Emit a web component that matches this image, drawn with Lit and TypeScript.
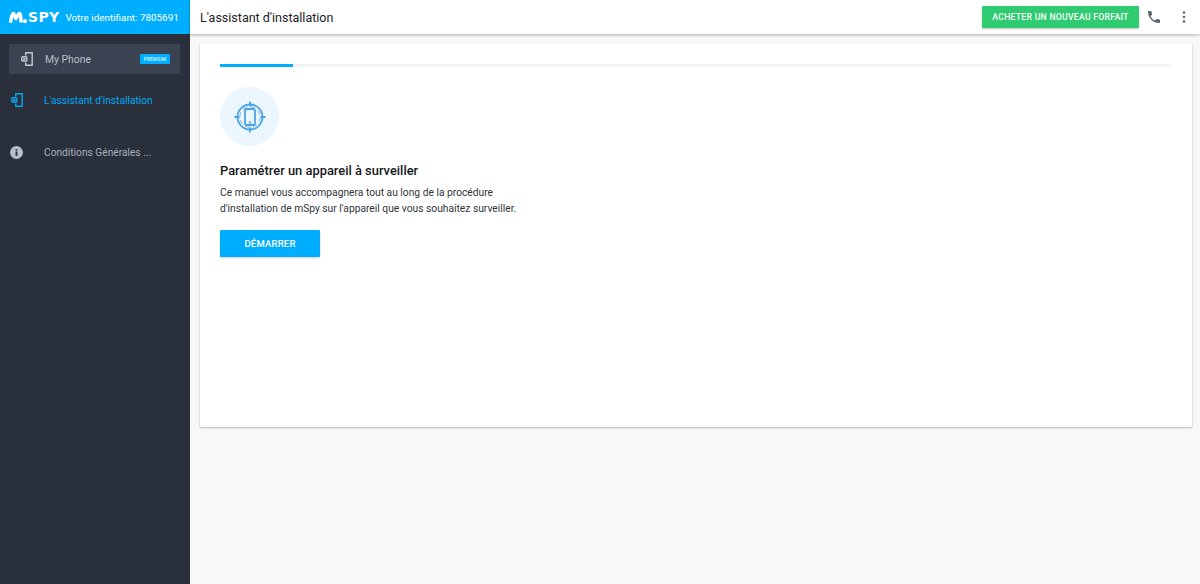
import { LitElement, html, css } from "lit";
import { customElement } from "lit/decorators.js";

const deviceIcon = html`<svg viewBox="0 0 12 14" width="12" height="14" fill="none" stroke="currentColor" stroke-width="1.400"><path d="M4.700 3.500V.8h6.500v12.400H4.700V10.500"/><rect x=".8" y="4.800" width="5" height="4.200" rx=".8"/><circle cx="3.300" cy="6.900" r=".5" fill="currentColor"/></svg>`;

@customElement("app-root")
export class AppRoot extends LitElement {
  static styles = css`
    :host {
      display: grid;
      grid-template-columns: 190px 1fr;
      height: 584px;
      overflow: hidden;
      font-family: Roboto, "Liberation Sans", sans-serif;
      background: #f7f8fa;
      color: #1b1f24;
    }
    .side { background: #2a303b; display: flex; flex-direction: column; height: 584px; }
    .brand {
      height: 34px; background: #00aeff; color: #fff;
      display: flex; align-items: center; padding-left: 9px; gap: 6px; font-size: 9.900px; white-space: nowrap;
    }
    .logo { display: flex; align-items: center; gap: 1px; }
    .logo-text { font-family: "DejaVu Sans", sans-serif; font-weight: 700; font-size: 14px; letter-spacing: .3px; line-height: 14px; }
    .phone {
      margin: 10px 10px 0 9px; height: 30px; background: #3b4352; border-radius: 1px;
      display: flex; align-items: center; color: #b7bdc6; font-size: 10.400px;
    }
    .phone .ic { margin-left: 12px; display: flex; color: #c3c8cf; }
    .phone .name { margin-left: 12px; flex: 1; }
    .badge {
      background: #00aeff; color: #fff; font-size: 5px; width: 30px; height: 10px;
      display: flex; align-items: center; justify-content: center; margin-right: 10px; border-radius: 1px;
    }
    .item { display: flex; align-items: center; font-size: 10.200px; height: 20px; }
    .item .ic { width: 44px; padding-left: 10px; box-sizing: border-box; display: flex; }
    .active { margin-top: 16px; color: #00a8f3; }
    .active .ic { padding-left: 11px; }
    .cond { margin-top: 32px; color: #a9aeb6; }
    .main { display: flex; flex-direction: column; min-width: 0; }
    .top {
      height: 34px; background: #fff; display: flex; align-items: center; padding-left: 10px;
      box-shadow: 0 1px 3px rgba(0,0,0,.3); position: relative; z-index: 1;
    }
    .title { flex: 1; font-size: 12.500px; color: #1d2126; }
    .buy {
      border: 0; background: #2ecb70; color: #fff; font: 500 8.600px Roboto, sans-serif; letter-spacing: .3px;
      width: 157px; height: 22px; border-radius: 1px; box-shadow: 0 1px 2px rgba(0,0,0,.25); padding: 0;
    }
    .tool { display: flex; align-items: center; justify-content: center; width: 30px; color: #5d6670; }
    .dots { margin-right: 1px; }
    .card {
      margin: 10px 8px 0 10px; height: 383px; background: #fff; box-shadow: 0 1px 2px rgba(0,0,0,.25);
      padding: 20px 20px 0; box-sizing: border-box; display: flex; flex-direction: column; align-items: flex-start;
    }
    .progress { height: 3px; width: 100%; background: #f3f3f4; }
    .bar { height: 3px; width: 73px; background: #00aeff; }
    .circle { margin-top: 20px; width: 59px; height: 59px; border-radius: 50%; background: #ebf6fe; display: flex; align-items: center; justify-content: center; color: #4ba3ea; }
    h1 { margin: 15px 0 0; font-size: 12.900px; line-height: 20px; font-weight: 500; color: #16191d; }
    p { margin: 4px 0 0; font-size: 10.250px; line-height: 16px; color: #30353b; }
    .start {
      margin-top: 13px; width: 100px; height: 27px; border: 0; border-radius: 1px; background: #00aeff; color: #fff;
      font: 500 9.500px Roboto, sans-serif; letter-spacing: .2px; box-shadow: 0 1px 2px rgba(0,0,0,.2); padding: 0;
    }
  `;

  render() {
    return html`
      <aside class="side">
        <div class="brand">
          <div class="logo">
            <svg width="18" height="13" viewBox="0 0 18 13" fill="#fff"><path d="M0 11C.6 6 1.800 1 4.200.8 6 .7 6.600 2.500 7 4 7.800 2 9 .6 11 .8 13.300 1 13.700 7 14 11.500H10.400C10.100 8.500 10 6.500 9.600 6 9 6.500 8.500 8.500 7.800 9.300H6C5.300 8.500 5 7 4.500 6.300 3.800 7.500 3.500 10 3 11.800 2 12.300.4 12 0 11Z"/><circle cx="16" cy="10.300" r="2"/></svg>
            <span class="logo-text">SPY</span>
          </div>
          <span>Votre identifiant: 7805691</span>
        </div>
        <div class="phone">
          <span class="ic">${deviceIcon}</span>
          <span class="name">My Phone</span>
          <span class="badge">PREMIUM</span>
        </div>
        <div class="item active"><span class="ic">${deviceIcon}</span>L'assistant d'installation</div>
        <div class="item cond">
          <span class="ic"><svg width="13" height="13" viewBox="0 0 14 14"><circle cx="7" cy="7" r="7" fill="#b4c0c8"/><rect x="6" y="6" width="2" height="4.600" fill="#2a303b"/><rect x="6" y="3.400" width="2" height="1.700" fill="#2a303b"/></svg></span>Conditions Générales ...
        </div>
      </aside>
      <div class="main">
        <header class="top">
          <span class="title">L'assistant d'installation</span>
          <button class="buy">ACHETER UN NOUVEAU FORFAIT</button>
          <span class="tool"><svg width="16" height="16" viewBox="0 0 24 24" fill="currentColor"><path d="M6.600 10.800c1.400 2.800 3.800 5.100 6.600 6.600l2.200-2.200c.3-.3.7-.4 1-.2 1.100.4 2.300.6 3.600.6.600 0 1 .4 1 1V20c0 .6-.4 1-1 1C10.600 21 3 13.400 3 4c0-.6.4-1 1-1h3.500c.6 0 1 .4 1 1 0 1.300.2 2.500.6 3.600.1.300 0 .7-.2 1z"/></svg></span>
          <span class="tool dots"><svg width="4" height="12" viewBox="0 0 4 12" fill="currentColor"><circle cx="2" cy="1.500" r="1.300"/><circle cx="2" cy="6" r="1.300"/><circle cx="2" cy="10.500" r="1.300"/></svg></span>
        </header>
        <section class="card">
          <div class="progress"><div class="bar"></div></div>
          <div class="circle">
            <svg width="32" height="32" viewBox="0 0 32 32" fill="none" stroke="currentColor" stroke-width="1.800"><circle cx="16" cy="16" r="12.500"/><circle cx="16" cy="16" r="10.200" stroke-width=".7" stroke-dasharray="5 3"/><rect x="11" y="8" width="10" height="16" rx="1.800"/><path d="M16 .5v5M16 26.500v5M.5 16h5M26.500 16h5"/><circle cx="16" cy="21.500" r=".4"/></svg>
          </div>
          <h1>Paramétrer un appareil à surveiller</h1>
          <p>Ce manuel vous accompagnera tout au long de la procédure<br />d'installation de mSpy sur l'appareil que vous souhaitez surveiller.</p>
          <button class="start">DÉMARRER</button>
        </section>
      </div>
    `;
  }
}
